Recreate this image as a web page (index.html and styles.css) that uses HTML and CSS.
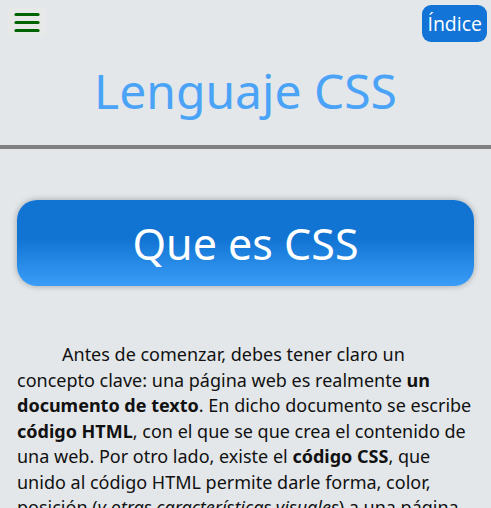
FILE: index.html
```html
<!DOCTYPE html>
<html lang="es">
<head>
<meta charset="utf-8">
<title>Lenguaje CSS</title>
<link rel="stylesheet" href="styles.css">
</head>
<body>
<header class="topbar">
  <button class="menu" aria-label="Menú">
    <svg width="26" height="20" viewBox="0 0 26 20"><g stroke="#006400" stroke-width="3.2" stroke-linecap="round"><line x1="2" y1="2.5" x2="24" y2="2.5"/><line x1="2" y1="10.5" x2="24" y2="10.5"/><line x1="2" y1="18.5" x2="24" y2="18.5"/></g></svg>
  </button>
  <a class="indice" href="#">Índice</a>
</header>
<h1 class="title">Lenguaje CSS</h1>
<hr class="rule">
<main class="content">
  <div class="section-btn">Que es CSS</div>
  <p class="text">Antes de comenzar, debes tener claro un concepto clave: una página web es realmente <b>un documento de texto</b>. En dicho documento se escribe <b>código HTML</b>, con el que se que crea el contenido de una web. Por otro lado, existe el <b>código CSS</b>, que unido al código HTML permite darle forma, color, posición (<i>y otras características visuales</i>) a una página.</p>
</main>
</body>
</html>
```
FILE: styles.css
```css
html, body {
  margin: 0;
  padding: 0;
}
body {
  background: #e3e7ea;
  font-family: "Noto Sans", "Open Sans", sans-serif;
  color: #111;
  overflow: hidden;
}
.topbar {
  display: flex;
  justify-content: space-between;
  align-items: flex-start;
  padding: 5px 4px 0 8px;
}
.menu {
  width: 38px;
  height: 28px;
  margin-top: 3px;
  border: none;
  background: #e7e9e8;
  padding: 0;
  display: flex;
  align-items: center;
  justify-content: center;
}
.indice {
  display: block;
  background: #1174d6;
  color: #fff;
  text-decoration: none;
  font-family: "Open Sans", sans-serif;
  font-size: 19.5px;
  line-height: 37px;
  height: 37px;
  padding: 0 5px;
  border-radius: 9px;
}
.title {
  margin: 19px 0 0;
  text-align: center;
  color: #4aa3f7;
  font-weight: 400;
  font-size: 48px;
  line-height: 60px;
}
.rule {
  margin: 24px 0 0;
  border: none;
  height: 4px;
  background: #808080;
}
.content {
  padding: 51px 17px 0;
}
.section-btn {
  height: 86px;
  border-radius: 20px;
  background: linear-gradient(to bottom, #1174d3 0%, #1174d3 45%, #3a9ef8 100%);
  box-shadow: 0 0 6px rgba(0,0,0,0.3);
  color: #fff;
  font-size: 43px;
  display: flex;
  align-items: center;
  justify-content: center;
}
.text {
  margin: 56px 0 0;
  font-size: 18px;
  line-height: 25.5px;
  text-indent: 45px;
}
.text b {
  font-weight: 700;
}
```
